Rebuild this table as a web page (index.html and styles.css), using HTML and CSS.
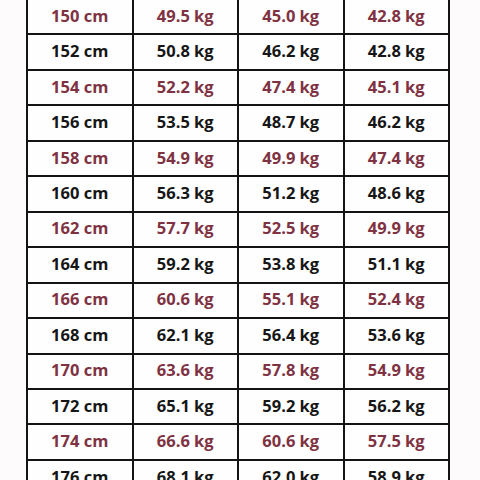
FILE: index.html
```html
<!DOCTYPE html>
<html>
<head>
<meta charset="utf-8">
<link rel="stylesheet" href="styles.css">
</head>
<body>
<div class="page">
  <div class="table">
    <div class="cell red">150 cm</div><div class="cell red">49.5 kg</div><div class="cell red">45.0 kg</div><div class="cell red">42.8 kg</div>
    <div class="cell">152 cm</div><div class="cell">50.8 kg</div><div class="cell">46.2 kg</div><div class="cell">42.8 kg</div>
    <div class="cell red">154 cm</div><div class="cell red">52.2 kg</div><div class="cell red">47.4 kg</div><div class="cell red">45.1 kg</div>
    <div class="cell">156 cm</div><div class="cell">53.5 kg</div><div class="cell">48.7 kg</div><div class="cell">46.2 kg</div>
    <div class="cell red">158 cm</div><div class="cell red">54.9 kg</div><div class="cell red">49.9 kg</div><div class="cell red">47.4 kg</div>
    <div class="cell">160 cm</div><div class="cell">56.3 kg</div><div class="cell">51.2 kg</div><div class="cell">48.6 kg</div>
    <div class="cell red">162 cm</div><div class="cell red">57.7 kg</div><div class="cell red">52.5 kg</div><div class="cell red">49.9 kg</div>
    <div class="cell">164 cm</div><div class="cell">59.2 kg</div><div class="cell">53.8 kg</div><div class="cell">51.1 kg</div>
    <div class="cell red">166 cm</div><div class="cell red">60.6 kg</div><div class="cell red">55.1 kg</div><div class="cell red">52.4 kg</div>
    <div class="cell">168 cm</div><div class="cell">62.1 kg</div><div class="cell">56.4 kg</div><div class="cell">53.6 kg</div>
    <div class="cell red">170 cm</div><div class="cell red">63.6 kg</div><div class="cell red">57.8 kg</div><div class="cell red">54.9 kg</div>
    <div class="cell">172 cm</div><div class="cell">65.1 kg</div><div class="cell">59.2 kg</div><div class="cell">56.2 kg</div>
    <div class="cell red">174 cm</div><div class="cell red">66.6 kg</div><div class="cell red">60.6 kg</div><div class="cell red">57.5 kg</div>
    <div class="cell">176 cm</div><div class="cell">68.1 kg</div><div class="cell">62.0 kg</div><div class="cell">58.9 kg</div>
  </div>
</div>
</body>
</html>
```
FILE: styles.css
```css
html, body {
  margin: 0;
  padding: 0;
  background: #fdfbfc;
  overflow: hidden;
}
.page {
  width: 480px;
  height: 480px;
  overflow: hidden;
  padding-left: 26px;
  box-sizing: border-box;
}
.table {
  display: grid;
  grid-template-columns: repeat(4, 103.5px);
  grid-auto-rows: 33.46px;
  gap: 2px;
  padding: 2px;
  background: #141414;
  width: max-content;
  margin-top: -2px;
}
.cell {
  background: #fefefe;
  display: flex;
  align-items: center;
  justify-content: center;
  padding-bottom: 3px;
  box-sizing: border-box;
  font-family: "Open Sans", "Liberation Sans", sans-serif;
  font-weight: 700;
  font-size: 16.5px;
  color: #161616;
}
.cell.red {
  color: #7e3242;
}
```
